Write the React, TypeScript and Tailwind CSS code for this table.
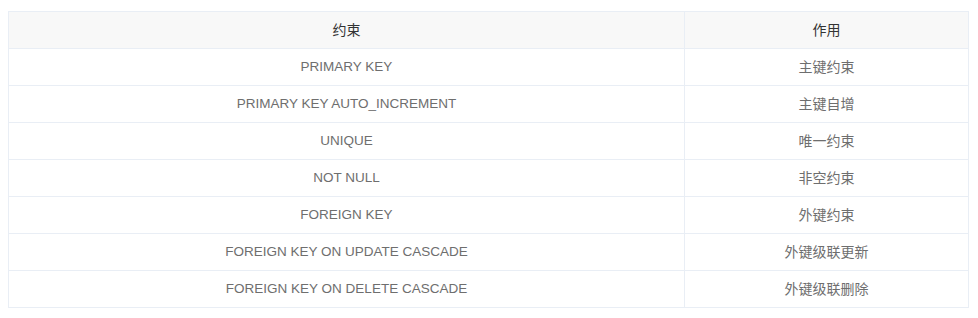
const rows: [string, string][] = [
  ['PRIMARY KEY', '主键约束'],
  ['PRIMARY KEY AUTO_INCREMENT', '主键自增'],
  ['UNIQUE', '唯一约束'],
  ['NOT NULL', '非空约束'],
  ['FOREIGN KEY', '外键约束'],
  ['FOREIGN KEY ON UPDATE CASCADE', '外键级联更新'],
  ['FOREIGN KEY ON DELETE CASCADE', '外键级联删除'],
];

export default function App() {
  return (
    <div className="bg-white w-[978px] h-[318px] pt-[11px] pl-[8px] font-['Liberation_Sans','Noto_Sans_CJK_SC',sans-serif]">
      <table className="w-[960px] border-collapse table-fixed">
        <colgroup>
          <col className="w-[676px]" />
          <col className="w-[284px]" />
        </colgroup>
        <thead>
          <tr className="bg-[#f8f8f8] h-[37px]">
            <th className="border border-[#e9eef5] font-normal text-[14px] text-[#333]">约束</th>
            <th className="border border-[#e9eef5] font-normal text-[14px] text-[#333]">作用</th>
          </tr>
        </thead>
        <tbody>
          {rows.map(([c, d]) => (
            <tr key={c} className="h-[37px]">
              <td className="border border-[#e9eef5] text-center text-[13.5px] text-[#6e6e6e]">{c}</td>
              <td className="border border-[#e9eef5] text-center text-[14px] text-[#6e6e6e]">{d}</td>
            </tr>
          ))}
        </tbody>
      </table>
    </div>
  );
}
